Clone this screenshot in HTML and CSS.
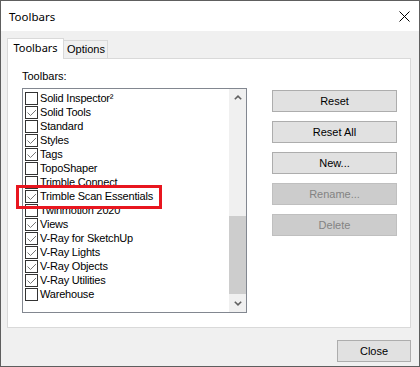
FILE: index.html
```html
<!DOCTYPE html>
<html>
<head>
<meta charset="utf-8">
<link rel="stylesheet" href="styles.css">
</head>
<body>
<div class="window">
  <div class="titlebar">
    <span class="title">Toolbars</span>
    <svg class="close-x" width="11" height="11" viewBox="0 0 11 11"><path d="M0.5 0.5 L10.5 10.5 M10.5 0.5 L0.5 10.5" stroke="#000" stroke-width="1" fill="none"/></svg>
  </div>
  <div class="content">
    <div class="tabs">
      <div class="tab active">Toolbars</div>
      <div class="tab">Options</div>
    </div>
    <div class="panel">
      <div class="left">
        <div class="label">Toolbars:</div>
        <div class="listbox">
          <div class="items">
            <div class="item"><span class="cb"></span><span class="txt">Solid Inspector²</span></div>
            <div class="item"><span class="cb checked"><svg viewBox="0 0 11 11"><polyline points="1.5,5.5 4.5,8.5 10,3"/></svg></span><span class="txt">Solid Tools</span></div>
            <div class="item"><span class="cb"></span><span class="txt">Standard</span></div>
            <div class="item"><span class="cb checked"><svg viewBox="0 0 11 11"><polyline points="1.5,5.5 4.5,8.5 10,3"/></svg></span><span class="txt">Styles</span></div>
            <div class="item"><span class="cb checked"><svg viewBox="0 0 11 11"><polyline points="1.5,5.5 4.5,8.5 10,3"/></svg></span><span class="txt">Tags</span></div>
            <div class="item"><span class="cb"></span><span class="txt">TopoShaper</span></div>
            <div class="item"><span class="cb"></span><span class="txt">Trimble Connect</span></div>
            <div class="item"><span class="cb checked"><svg viewBox="0 0 11 11"><polyline points="1.5,5.5 4.5,8.5 10,3"/></svg></span><span class="txt">Trimble Scan Essentials</span></div>
            <div class="item"><span class="cb"></span><span class="txt">Twinmotion 2020</span></div>
            <div class="item"><span class="cb checked"><svg viewBox="0 0 11 11"><polyline points="1.5,5.5 4.5,8.5 10,3"/></svg></span><span class="txt">Views</span></div>
            <div class="item"><span class="cb checked"><svg viewBox="0 0 11 11"><polyline points="1.5,5.5 4.5,8.5 10,3"/></svg></span><span class="txt">V-Ray for SketchUp</span></div>
            <div class="item"><span class="cb checked"><svg viewBox="0 0 11 11"><polyline points="1.5,5.5 4.5,8.5 10,3"/></svg></span><span class="txt">V-Ray Lights</span></div>
            <div class="item"><span class="cb checked"><svg viewBox="0 0 11 11"><polyline points="1.5,5.5 4.5,8.5 10,3"/></svg></span><span class="txt">V-Ray Objects</span></div>
            <div class="item"><span class="cb checked"><svg viewBox="0 0 11 11"><polyline points="1.5,5.5 4.5,8.5 10,3"/></svg></span><span class="txt">V-Ray Utilities</span></div>
            <div class="item"><span class="cb"></span><span class="txt">Warehouse</span></div>
          </div>
          <div class="scrollbar">
            <div class="arrow"><svg width="8" height="5" viewBox="0 0 8 5"><polyline points="0.8,4.3 4,1.2 7.2,4.3" fill="none" stroke="#606060" stroke-width="1.6"/></svg></div>
            <div class="track"><div class="thumb"></div></div>
            <div class="arrow"><svg width="8" height="5" viewBox="0 0 8 5"><polyline points="0.8,0.7 4,3.8 7.2,0.7" fill="none" stroke="#606060" stroke-width="1.6"/></svg></div>
          </div>
          <div class="highlight"></div>
        </div>
      </div>
      <div class="buttons">
        <div class="btn">Reset</div>
        <div class="btn">Reset All</div>
        <div class="btn">New...</div>
        <div class="btn disabled">Rename...</div>
        <div class="btn disabled">Delete</div>
      </div>
    </div>
    <div class="footer">
      <div class="btn close">Close</div>
    </div>
  </div>
</div>
</body>
</html>
```
FILE: styles.css
```css
* { box-sizing: border-box; }
html, body { margin: 0; padding: 0; background: #f0f0f0; }
body {
  font-family: "Liberation Sans", Arial, sans-serif;
  font-size: 11px;
  color: #000;
}
.window {
  width: 420px;
  height: 367px;
  border: 1px solid #5e5e5e;
  background: #f0f0f0;
  display: flex;
  flex-direction: column;
}
.titlebar {
  height: 30px;
  background: #fff;
  display: flex;
  align-items: center;
  justify-content: space-between;
  padding: 0 9px 0 8px;
}
.title {
  font-family: "Noto Sans", "Liberation Sans", sans-serif;
  font-size: 11.5px;
  margin-top: 1px;
}
.close-x { display: block; }
.content {
  display: flex;
  flex-direction: column;
  padding: 7px 8px 0 6px;
}
.tabs {
  display: flex;
  align-items: flex-end;
  margin-bottom: -1px;
  height: 21px;
}
.tab {
  border: 1px solid #d9d9d9;
  background: #f0f0f0;
  height: 19px;
  width: 45px;
  margin-left: -1px;
  text-align: center;
  line-height: 16px;
  padding-left: 1px;
}
.tab.active {
  position: relative;
  z-index: 1;
  margin-left: 0;
  width: 57px;
  height: 21px;
  background: #fff;
  border-bottom: none;
  font-family: "Noto Sans", "Liberation Sans", sans-serif;
  font-size: 11px;
  line-height: 18px;
  padding-left: 0;
}
.panel {
  height: 270px;
  background: #fff;
  border: 1px solid #d9d9d9;
  display: flex;
  padding: 11px 0 0 14px;
}
.left { display: flex; flex-direction: column; }
.label { line-height: 13px; height: 13px; margin-bottom: 5px; }
.listbox {
  position: relative;
  width: 225px;
  height: 225px;
  border: 1px solid #828790;
  display: flex;
  background: #fff;
}
.items {
  flex: 1;
  padding: 2px 0 0 2px;
}
.item {
  height: 14px;
  display: flex;
  align-items: center;
  white-space: nowrap;
}
.cb {
  width: 13px;
  height: 13px;
  border: 1px solid #333;
  background: #fff;
  flex: none;
  display: flex;
}
.cb svg { width: 11px; height: 11px; }
.cb polyline { fill: none; stroke: #777; stroke-width: 1; }
.txt { margin-left: 2px; line-height: 14px; letter-spacing: -0.2px; }
.scrollbar {
  width: 17px;
  background: #f0f0f0;
  display: flex;
  flex-direction: column;
}
.arrow {
  height: 17px;
  display: flex;
  align-items: center;
  justify-content: center;
}
.track { flex: 1; }
.thumb {
  margin-top: 110px;
  height: 78px;
  background: #cdcdcd;
}
.highlight {
  position: absolute;
  left: -7px;
  top: 96px;
  width: 146px;
  height: 24px;
  border: 3px solid #e8161f;
}
.buttons {
  display: flex;
  flex-direction: column;
  gap: 9px;
  margin-left: 25px;
  margin-top: 20px;
}
.btn {
  width: 125px;
  height: 22px;
  border: 1px solid #adadad;
  background: #e1e1e1;
  text-align: center;
  line-height: 20px;
}
.btn.disabled {
  background: #cccccc;
  border-color: #bfbfbf;
  color: #838383;
}
.footer {
  display: flex;
  justify-content: flex-end;
  margin-top: 12px;
}
.btn.close { width: 74px; }
```
